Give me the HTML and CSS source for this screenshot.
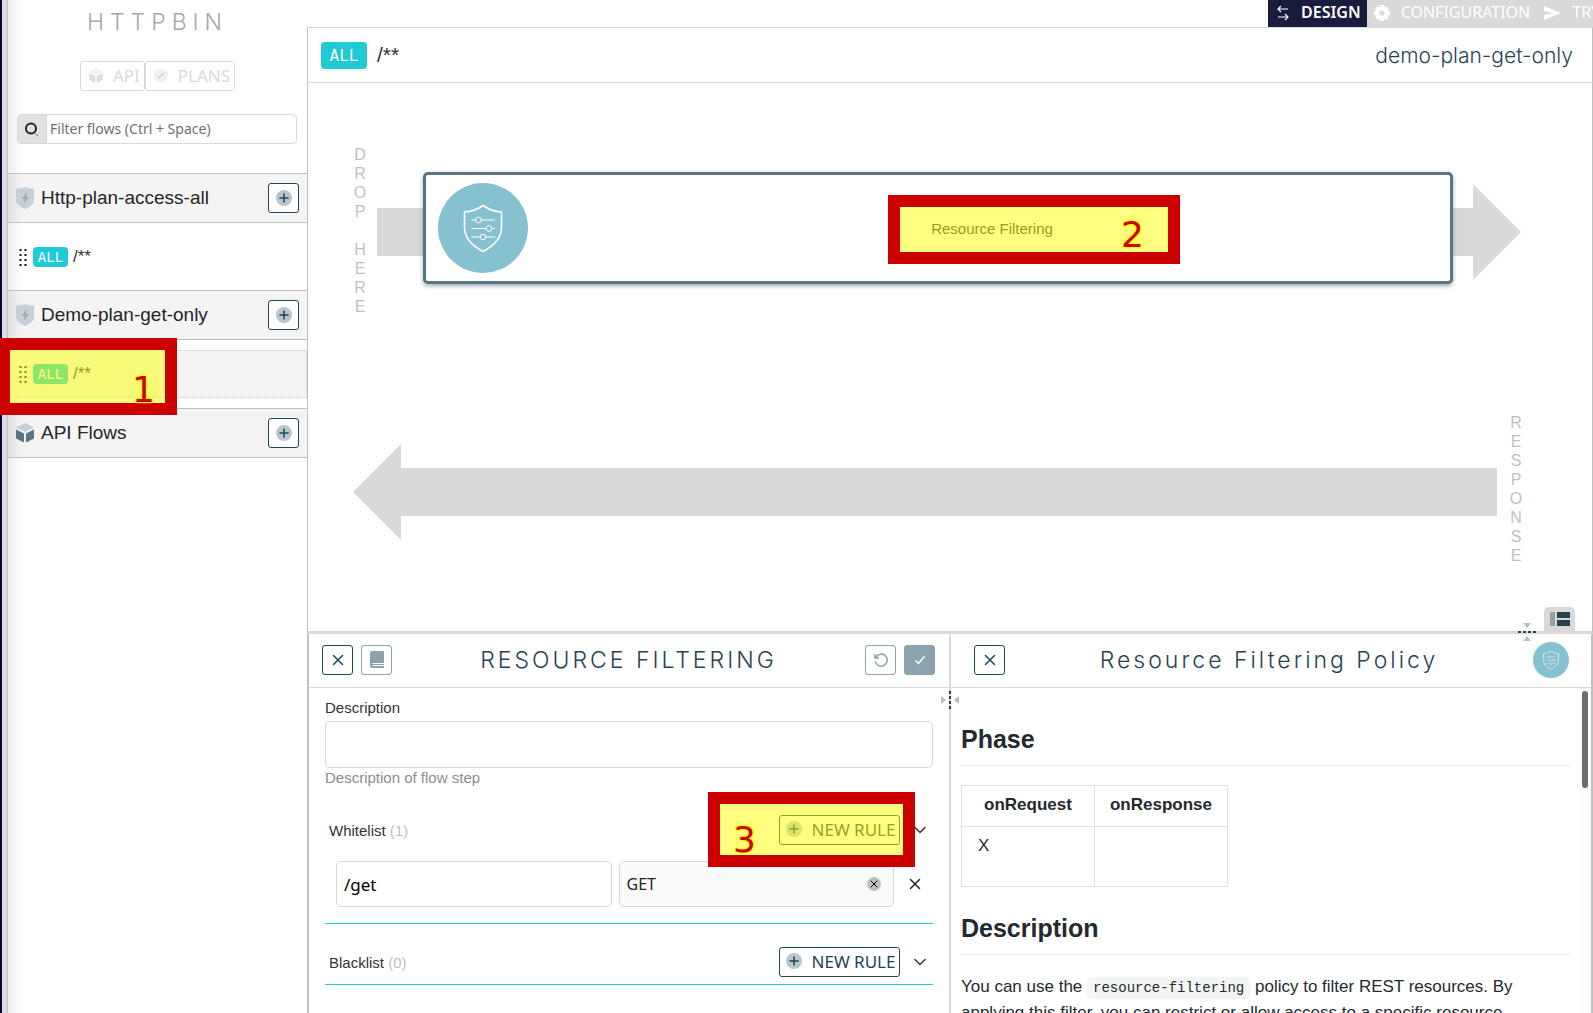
FILE: index.html
```html
<!DOCTYPE html>
<html lang="en">
<head>
<meta charset="utf-8">
<title>Httpbin - Policy studio</title>
<meta name="viewport" content="width=device-width, initial-scale=1">
<link rel="stylesheet" href="styles.css">
</head>
<body>
<svg class="sprite" aria-hidden="true">
  <symbol id="i-plus" viewBox="0 0 16 16"><circle cx="8" cy="8" r="8" fill="#b9c6cd"/><path d="M8 3.400v9.200M3.400 8h9.200" stroke="currentColor" stroke-width="1.500" fill="none"/></symbol>
  <symbol id="i-cube" viewBox="0 0 18 20"><path class="cube-top" d="M9 0l9 4.500-9 4.500-9-4.500z"/><path class="cube-side" d="M0 6.500l8 4v9l-8-4zM18 6.500l-8 4v9l8-4z"/></symbol>
  <symbol id="i-cube-light" viewBox="0 0 18 20"><path fill="#f0f0f0" d="M9 0l9 4.500-9 4.500-9-4.500z"/><path fill="#dcdcdc" d="M0 6.500l8 4v9l-8-4zM18 6.500l-8 4v9l8-4z"/></symbol>
  <symbol id="i-bolt-shield" viewBox="0 0 18 22"><path fill="#c6d0d5" d="M9 0c2.500 1.200 6 1.500 9 1.500V13c0 4-4 7-9 9-5-2-9-5-9-9V1.500C3 1.500 6.500 1.200 9 0z"/><path fill="#9badb6" d="M11 5l-5.500 7h3l-1 5 5.500-7h-3z"/></symbol>
  <symbol id="i-grip" viewBox="0 0 8 18"><path d="M.5 2h2M5.500 2h2M.5 7h2M5.500 7h2M.5 12h2M5.500 12h2M.5 17h2M5.500 17h2" stroke="#111" stroke-width="2"/></symbol>
  <symbol id="i-cross" viewBox="0 0 12 12"><path d="M1.500 1.500l9 9M10.500 1.500l-9 9" stroke="currentColor" stroke-width="1.500" stroke-linecap="round" fill="none"/></symbol>
  <symbol id="i-chevron" viewBox="0 0 12 8"><path d="M1 1.500l5 5 5-5" stroke="currentColor" stroke-width="1.500" fill="none" stroke-linecap="round"/></symbol>
  <symbol id="i-policy" viewBox="0 0 90 90"><circle cx="45" cy="45" r="45" fill="#86c1cf"/><g fill="none" stroke="#fff"><path stroke-width="1.600" d="M45 22.500c5 3.500 11 6 18.500 6.500v15c0 11-8 19-18.500 24.500C34.500 63 26.500 55 26.500 44V29C34 28.500 40 26 45 22.500z"/><path d="M33.500 37h4M43.500 37h13M33.500 45.500h14.500M53.500 45.500h3.500M33.500 54h9M48 54h9"/><circle cx="40.500" cy="37" r="2.800"/><circle cx="51" cy="45.500" r="2.800"/><circle cx="45" cy="54" r="2.800"/></g></symbol>
</svg>
<div class="app">
  <div class="page-edge"></div>
  <aside class="sidebar">
    <h1 class="api-name">HTTPBIN</h1>
    <div class="button-group">
      <button class="ghost" type="button"><svg class="ghost-icon"><use href="#i-cube-light"/></svg>API</button>
      <button class="ghost" type="button"><svg class="ghost-icon" viewBox="0 0 16 16"><path fill="#f0f0f0" d="M8 0l2 1.600 2.500-.4 1 2.300 2.300 1-.4 2.500L16 8l-1.600 2 .4 2.500-2.300 1-1 2.300-2.500-.4L8 16l-2-1.600-2.500.4-1-2.300-2.300-1 .4-2.500L0 8l1.600-2-.4-2.500 2.300-1 1-2.300L6 1.600z"/><path stroke="#cfcfcf" stroke-width="1.500" d="M5 11l6-6"/></svg>PLANS</button>
    </div>
    <label class="search">
      <span class="search-icon"><svg width="14" height="15" viewBox="0 0 14 15"><circle cx="6" cy="6.500" r="5" fill="none" stroke="#222" stroke-width="2"/><path d="M10 11l3 3" stroke="#aaa" stroke-width="1.500"/></svg></span>
      <input class="search-input" type="search" aria-label="Filter flows" placeholder="Filter flows (Ctrl + Space)">
    </label>
    <section>
      <div class="plan-head"><svg class="plan-icon"><use href="#i-bolt-shield"/></svg><h2 class="plan-name">Http-plan-access-all</h2><button class="square" type="button" aria-label="Add flow"><svg class="i16"><use href="#i-plus"/></svg></button></div>
      <div class="flows"><div class="flow"><svg class="grip"><use href="#i-grip"/></svg><span class="tag">ALL</span><span>/**</span></div></div>
    </section>
    <section>
      <div class="plan-head"><svg class="plan-icon"><use href="#i-bolt-shield"/></svg><h2 class="plan-name">Demo-plan-get-only</h2><button class="square" type="button" aria-label="Add flow"><svg class="i16"><use href="#i-plus"/></svg></button></div>
      <div class="flows"><div class="flow selected"><svg class="grip"><use href="#i-grip"/></svg><span class="tag">ALL</span><span>/**</span><div class="mark mark-flow">1</div></div></div>
    </section>
    <section>
      <div class="plan-head"><svg class="plan-icon"><use href="#i-cube"/></svg><h2 class="plan-name">API Flows</h2><button class="square" type="button" aria-label="Add flow"><svg class="i16"><use href="#i-plus"/></svg></button></div>
    </section>
  </aside>
  <main class="main">
    <nav class="tabs">
      <a class="tab active" href="#design"><svg width="14" height="17" viewBox="0 0 14 17" fill="none" stroke="#fff" stroke-width="1.200"><path d="M2 5h10M5 2L2 5l3 3M2 13h10M9 10l3 3-3 3"/></svg>DESIGN</a>
      <a class="tab" href="#configuration"><svg width="16" height="16" viewBox="0 0 16 16" fill="#fff"><path fill-rule="evenodd" d="M6 0h4l.5 2.200 2-1 2.300 2.300-1 2L16 6v4l-2.200.5 1 2-2.300 2.300-2-1L10 16H6l-.5-2.200-2 1-2.300-2.300 1-2L0 10V6l2.200-.5-1-2 2.300-2.300 2 1zM8 5.400a2.600 2.600 0 100 5.200 2.600 2.600 0 000-5.200z"/></svg>CONFIGURATION</a>
      <a class="tab" href="#try"><svg width="17" height="14" viewBox="0 0 17 14" fill="#fff"><path d="M0 0l17 7-17 7V9l9-2-9-2z"/></svg>TRY IT</a>
    </nav>
    <div class="flow-bar"><span class="tag tag-large">ALL</span><span class="flow-path">/**</span><h2 class="flow-plan">demo-plan-get-only</h2></div>
    <div class="canvas">
      <div class="lane">
        <div class="lane-label">D<br>R<br>O<br>P<br><br>H<br>E<br>R<br>E</div>
        <div class="arrow">
          <div class="step"><svg class="step-icon"><use href="#i-policy"/></svg><span class="step-name">Resource Filtering</span><div class="mark mark-step">2</div></div>
          <div class="shaft"></div><div class="head"></div>
        </div>
      </div>
      <div class="lane lane-response">
        <div class="arrow"><div class="head head-left"></div><div class="shaft"></div></div>
        <div class="lane-label">R<br>E<br>S<br>P<br>O<br>N<br>S<br>E</div>
      </div>
      <button class="layout-toggle" type="button" aria-label="Toggle layout"><svg width="20" height="14" viewBox="0 0 20 14"><path fill="#9d9f9f" d="M0 0h5v14H0z"/><path fill="#28434f" d="M7 0h13v6H7zM7 8h13v6H7z"/></svg></button>
      <svg class="resize-v" width="18" height="18" viewBox="0 0 18 18"><path fill="#bbb" d="M5 0h8L9 5zM5 18h8l-4-5z"/><path d="M0 9h18" stroke="#28434f" stroke-width="2" stroke-dasharray="3 2"/></svg>
    </div>
    <div class="panels">
      <section class="panel">
        <header class="panel-head">
          <button class="square" type="button" aria-label="Close"><svg class="i12"><use href="#i-cross"/></svg></button>
          <button class="square muted" type="button" aria-label="Documentation"><svg width="14" height="17" viewBox="0 0 14 17"><path fill="#8ca2ad" d="M2 0h12v12H2.500a1 1 0 000 1H14v1H2.500v1H14v2H2a2 2 0 01-2-2V2a2 2 0 012-2z"/></svg></button>
          <h2 class="panel-title">RESOURCE FILTERING</h2>
          <button class="square muted" type="button" aria-label="Reset"><svg width="14" height="14" viewBox="0 0 14 14" fill="none" stroke="#8ca2ad" stroke-width="1.500"><path d="M2 4a6 6 0 11-.8 4M1 1v4h4"/></svg></button>
          <button class="square solid" type="button" aria-label="Save"><svg width="12" height="10" viewBox="0 0 12 10" fill="none" stroke="#fff" stroke-width="1.500"><path d="M1.500 5.500l3 3 6-7"/></svg></button>
        </header>
        <form class="form">
          <label class="label" for="description">Description</label>
          <input class="field" id="description" type="text">
          <p class="help">Description of flow step</p>
          <div class="rules">
            <div class="rules-head"><h3 class="rules-title">Whitelist <span class="count">(1)</span></h3><div class="mark-anchor"><button class="rule-button" type="button"><svg class="i16"><use href="#i-plus"/></svg>NEW RULE</button><div class="mark mark-rule">3</div></div><svg class="chevron"><use href="#i-chevron"/></svg></div>
            <div class="rule">
              <input class="field" type="text" value="/get" aria-label="Pattern">
              <div class="field methods"><span>GET</span><button class="clear" type="button" aria-label="Clear"><svg width="8" height="8"><use href="#i-cross"/></svg></button></div>
              <button class="remove" type="button" aria-label="Remove rule"><svg class="i12"><use href="#i-cross"/></svg></button>
            </div>
          </div>
          <div class="rules">
            <div class="rules-head"><h3 class="rules-title">Blacklist <span class="count">(0)</span></h3><button class="rule-button" type="button"><svg class="i16"><use href="#i-plus"/></svg>NEW RULE</button><svg class="chevron"><use href="#i-chevron"/></svg></div>
          </div>
        </form>
      </section>
      <section class="panel panel-doc">
        <svg class="resize-h" width="18" height="18" viewBox="0 0 18 18"><path fill="#bbb" d="M0 5v8l5-4zM18 5v8l-5-4z"/><path d="M9 0v18" stroke="#28434f" stroke-width="2" stroke-dasharray="3 2"/></svg>
        <header class="panel-head doc-head">
          <button class="square" type="button" aria-label="Close documentation"><svg class="i12"><use href="#i-cross"/></svg></button>
          <h2 class="panel-title">Resource Filtering Policy</h2>
          <svg class="doc-icon"><use href="#i-policy"/></svg>
        </header>
        <div class="doc-body">
          <article class="doc">
            <h2>Phase</h2>
            <table><thead><tr><th>onRequest</th><th>onResponse</th></tr></thead><tbody><tr><td>X</td><td></td></tr></tbody></table>
            <h2>Description</h2>
            <p>You can use the <code>resource-filtering</code> policy to filter REST resources. By applying this filter, you can restrict or allow access to a specific resource</p>
          </article>
          <div class="track"><div class="thumb"></div></div>
        </div>
      </section>
    </div>
  </main>
</div>
</body>
</html>
```
FILE: styles.css
```css
* { box-sizing: border-box; }
body { margin: 0; font-family: "Liberation Sans", Arial, sans-serif; font-size: 15px; color: #333; background: #fff; }
h1, h2, h3, p { margin: 0; font-weight: 400; }
button, input { font-family: "Noto Sans", "Open Sans", sans-serif; }
button { padding: 0; background: #fff; display: flex; align-items: center; justify-content: center; }
svg { flex: none; display: block; }
.sprite { position: absolute; width: 0; height: 0; }
.i16 { width: 16px; height: 16px; }
.i12 { width: 12px; height: 12px; }
.cube-top { fill: #c6d0d5; }
.cube-side { fill: #5a7684; }

.app { display: flex; height: 100vh; overflow: hidden; }
.page-edge { width: 8px; flex: none; background: #dfdede; border-left: 2px solid #0b0640; border-right: 1px solid #c4c4c4; }

.sidebar { width: 299px; flex: none; background: linear-gradient(90deg, rgba(0, 0, 0, .07), transparent 14px); }
.api-name { padding: 7px 0 0; height: 61px; font-family: Inter, sans-serif; font-size: 23px; line-height: 30px; font-weight: 300; letter-spacing: 6px; text-align: center; color: #a8a8a8; }
.button-group { display: flex; justify-content: center; }
.ghost { height: 30px; border: 1px solid #d9d9d9; border-radius: 3px; color: #d9d9d9; font-size: 17px; padding: 0 4px 2px 7px; gap: 9px; }
.ghost-icon { width: 16px; height: 15px; }
.search { display: flex; margin: 23px 10px 29px 9px; height: 30px; border: 1px solid #d9d9d9; border-radius: 4px; overflow: hidden; }
.search-icon { width: 29px; background: #e1e1e1; border-right: 1px solid #d9d9d9; display: flex; align-items: center; justify-content: center; }
.search-input { flex: 1; min-width: 0; border: 0; padding: 0 3px 2px; font-size: 14px; background: none; }
.search-input::placeholder { color: #707070; }
.plan-head { height: 50px; display: flex; align-items: center; gap: 7px; padding: 0 8px; border: solid #bfbfbf; border-width: 1px 0; background: rgba(0, 0, 0, .045); }
.plan-icon { width: 18px; height: 22px; }
.plan-name { flex: 1; font-size: 19px; color: #262626; }
.square { width: 31px; height: 30px; border: 1px solid #1d4557; border-radius: 3px; color: #1d4557; flex: none; }
.square.muted { border-color: #8ca2ad; }
.square.solid { border-color: #8ca2ad; background: #8ca2ad; }
.flows { padding: 10px 0; }
.flow { position: relative; display: flex; align-items: center; height: 47px; padding-left: 11px; font-size: 17px; }
.flow.selected { height: 48px; background: #f4f4f4; outline: 1px dotted #ccc; outline-offset: -1px; }
.grip { width: 8px; height: 18px; margin-right: 6px; }
.tag { background: #1dcad6; color: #fff; border-radius: 4px; font: 14px/20px "DejaVu Sans Mono", monospace; width: 35px; text-align: center; margin-right: 5px; }
.tag-large { font-size: 16px; line-height: 27px; width: 46px; margin-right: 10px; }

.mark { position: absolute; border: 12px solid #c00; background: rgba(255, 255, 0, .5); color: #c00; font: 36px/36px "DejaVu Sans", sans-serif; text-shadow: 0 0 2px #ff0, 1px 1px 1px #ff0, -1px -1px 1px #ff0, 1px -1px 1px #ff0, -1px 1px 1px #ff0; }
.mark-flow { left: -10px; top: -12px; width: 179px; height: 77px; padding: 22px 0 0 122px; }
.mark-step { left: calc(50% - 50px); top: 20px; width: 292px; height: 69px; padding: 10px 0 0 221px; }
.mark-rule { right: -15px; top: -23px; width: 207px; height: 75px; padding: 18px 0 0 13px; }
.mark-anchor { position: relative; }

.main { flex: 1; min-width: 0; display: flex; flex-direction: column; }
.tabs { display: flex; height: 27px; margin-left: calc(100% - 325px); overflow: hidden; background: #d9d9d9; flex: none; }
.tab { display: flex; align-items: center; gap: 11px; flex: none; height: 25px; padding: 0 7px; color: #fff; text-decoration: none; font: 16px/25px "Noto Sans", sans-serif; }
.tab.active { height: 27px; padding: 0 6px 2px 8px; background: #1a1c3d; font-weight: 600; }
.flow-bar { display: flex; align-items: center; height: 56px; flex: none; padding: 0 19px 0 13px; border: 1px solid #d9d9d9; border-left-color: #bfbfbf; border-right-color: #bfbfbf; }
.flow-path { font-size: 21px; }
.flow-plan { margin-left: auto; font-family: Inter, sans-serif; font-size: 21px; font-weight: 300; color: #28434f; }
.canvas { position: relative; flex: none; height: 551px; padding: 62px 71px 0 45px; border: solid #bfbfbf; border-width: 0 1px; border-bottom: 3px solid #d9d9d9; }
.lane { display: flex; align-items: center; gap: 10px; }
.lane-label { width: 14px; padding-bottom: 3px; text-align: center; font-size: 16px; line-height: 19px; color: #bfbfbf; }
.arrow { position: relative; display: flex; align-items: center; flex: 1; height: 96px; }
.shaft { flex: 1; height: 48px; background: #d9d9d9; }
.head { width: 48px; height: 96px; background: #d9d9d9; clip-path: polygon(0 0, 100% 50%, 0 100%); }
.head-left { clip-path: polygon(100% 0, 0 50%, 100% 100%); }
.step { position: absolute; left: 46px; right: 68px; top: -12px; height: 112px; display: flex; align-items: center; padding: 0 12px; background: #fff; border: 3px solid #5a7684; border-radius: 5px; box-shadow: 0 2px 4px rgba(90, 118, 132, .6); }
.step-icon { width: 90px; height: 90px; }
.step-name { flex: 1; text-align: center; padding-left: 18px; }
.lane-response { gap: 12px; margin-top: 94px; margin-right: -2px; }
.lane-response .lane-label { padding-bottom: 6px; }
.layout-toggle { position: absolute; right: 17px; bottom: 0; width: 31px; height: 24px; border: 0; border-radius: 5px 5px 0 0; background: #d9d9d9; }
.resize-v { position: absolute; right: 56px; bottom: -10px; z-index: 1; }

.panels { flex: 1; min-height: 0; display: grid; grid-template-columns: minmax(0, 640fr) minmax(0, 642fr); border: solid #bfbfbf; border-width: 0 2px; overflow: hidden; }
.panel { position: relative; min-width: 0; min-height: 0; display: flex; flex-direction: column; }
.panel-doc { border-left: 2px solid #d9d9d9; }
.panel-head { height: 54px; flex: none; display: flex; align-items: center; gap: 8px; padding: 0 14px 2px 13px; border-bottom: 1px solid #d9d9d9; }
.panel-title { flex: 1; text-align: center; font-family: Inter, sans-serif; font-size: 23px; font-weight: 300; letter-spacing: 3px; color: #28434f; }
.doc-head { padding: 0 22px 2px 23px; }
.doc-icon { width: 36px; height: 36px; }
.form { padding: 12px 16px; }
.label { display: block; line-height: 16px; margin-bottom: 5px; }
.field { width: 100%; height: 47px; border: 1px solid #d9d9d9; border-radius: 5px; padding: 0 7px; font-size: 17px; color: #000; background: #fff; display: block; }
.help { line-height: 20px; color: #8c8c8c; }
.rules { border-bottom: 1px solid #1ecad3; }
.rules + .rules { padding-bottom: 7px; margin-top: 23px; }
.help + .rules { margin-top: 27px; padding-bottom: 16px; }
.rules-head { display: flex; align-items: center; padding: 0 7px 0 4px; }
.rules-title { flex: 1; font-size: 15px; }
.count { color: #bfbfbf; }
.rule-button { width: 121px; height: 30px; gap: 10px; padding: 0 0 2px 2px; border: 1px solid #1d4557; border-radius: 3px; color: #1d4557; font-size: 17px; }
.chevron { width: 12px; height: 8px; margin-left: 14px; }
.rule { display: grid; grid-template-columns: minmax(0, 1fr) minmax(0, 1fr) 20px; gap: 7px; margin: 16px 12px 0 11px; }
.rule .field { height: 46px; }
.rule .methods { display: flex; align-items: center; justify-content: space-between; padding-right: 12px; background: #fafafa; color: #262626; font-size: 16px; font-family: "Noto Sans", sans-serif; }
.clear { width: 14px; height: 14px; border: 0; border-radius: 7px; background: #bfbfbf; }
.remove { border: 0; color: #262626; background: none; justify-content: flex-end; }

.resize-h { position: absolute; left: -10px; top: 57px; }
.doc-body { flex: 1; min-height: 0; display: flex; overflow: hidden; font-size: 17px; line-height: 26px; color: #24292e; }
.doc { flex: 1; min-width: 0; padding: 36px 9px 0 10px; }
.doc h2 { font-size: 25px; line-height: 31px; font-weight: 700; padding-bottom: 10px; border-bottom: 1px solid #eaecef; margin-bottom: 19px; }
.doc table { border-collapse: collapse; table-layout: fixed; width: 267px; margin-bottom: 26px; }
.doc th, .doc td { border: 1px solid #dfe2e5; padding: 0; height: 41px; }
.doc th { padding-bottom: 3px; }
.doc td { height: 60px; padding: 6px 16px; vertical-align: top; }
.doc code { font: 14px/22px "Liberation Mono", monospace; background: #f3f4f4; border-radius: 4px; padding: 3px 6px; }
.track { width: 12px; padding: 3px; background: #fcfcfc; }
.thumb { width: 6px; height: 97px; border-radius: 3px; background: #6e6e6e; }
```
